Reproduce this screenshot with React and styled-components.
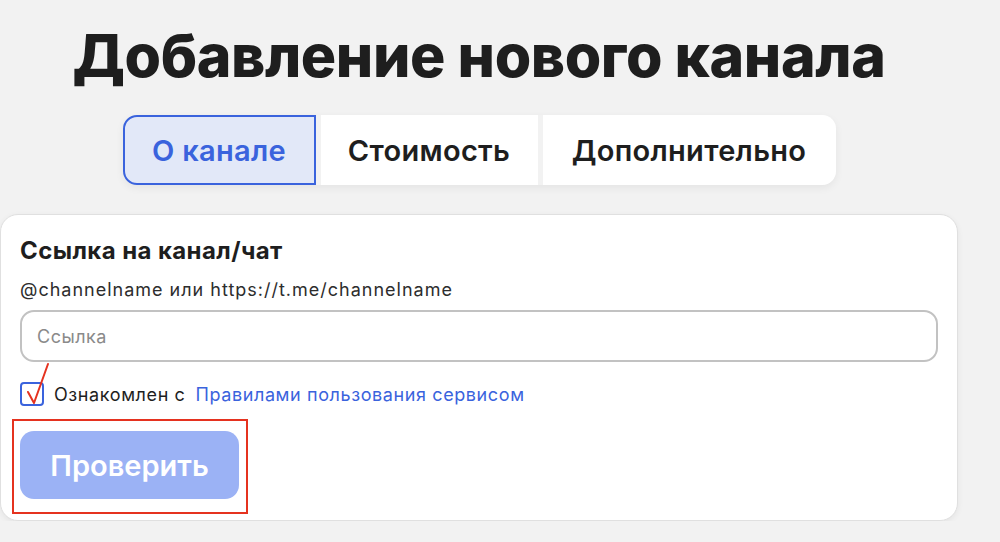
import React, { useState } from 'react';
import styled, { createGlobalStyle } from 'styled-components';

const GlobalStyle = createGlobalStyle`
  html, body {
    margin: 0;
    padding: 0;
    background: #f2f2f2;
    font-family: Inter, "Noto Sans", sans-serif;
    color: #1c1c1c;
  }
`;

const tabs = [
  { label: 'О канале', width: 193 },
  { label: 'Стоимость', width: 217 },
  { label: 'Дополнительно', width: 293 },
];

const Page = styled.div`
  width: 958px;
  display: flex;
  flex-direction: column;
  align-items: center;
  padding-top: 19px;
`;

const Title = styled.h1`
  margin: 0;
  font-size: 59px;
  font-weight: 800;
  letter-spacing: -0.4px;
  line-height: 74px;
  color: #1e1e1e;
`;

const TabBar = styled.div`
  margin-top: 22px;
  display: flex;
  gap: 5px;
  border-radius: 14px;
  box-shadow: 0 3px 8px rgba(0, 0, 0, 0.06);
`;

const Tab = styled.button`
  width: ${(p) => p.$width}px;
  height: 70px;
  padding: 0;
  border: 2px solid ${(p) => (p.$active ? '#3a63dd' : 'transparent')};
  background: ${(p) => (p.$active ? '#e2e8f8' : '#ffffff')};
  color: ${(p) => (p.$active ? '#3a63dd' : '#1e1e1e')};
  font-family: inherit;
  font-size: 29px;
  font-weight: 600;
  letter-spacing: 0.3px;
  cursor: pointer;
  border-radius: 0;

  &:first-child {
    border-radius: 14px 0 0 14px;
  }

  &:last-child {
    border-radius: 0 14px 14px 0;
  }
`;

const Card = styled.div`
  position: relative;
  margin-top: 29px;
  align-self: stretch;
  background: #ffffff;
  border: 1px solid #e0e0e0;
  border-radius: 18px;
  box-shadow: 0 2px 6px rgba(0, 0, 0, 0.06);
  padding: 21px 19px 21px;
  display: flex;
  flex-direction: column;
  align-items: flex-start;
`;

const Heading = styled.h2`
  margin: 0;
  font-size: 24px;
  font-weight: 700;
  letter-spacing: 0.4px;
  color: #1e1e1e;
`;

const Hint = styled.p`
  margin: 14px 0 0;
  font-size: 18px;
  letter-spacing: 1px;
  color: #2d2d2d;
`;

const Input = styled.input`
  margin-top: 10px;
  align-self: stretch;
  height: 52px;
  box-sizing: border-box;
  border: 2px solid #c2c2c2;
  border-radius: 14px;
  padding: 0 15px;
  font-family: inherit;
  font-size: 18px;
  letter-spacing: 0.5px;
  outline: none;

  &::placeholder {
    color: #8a8a8a;
  }
`;

const CheckRow = styled.label`
  position: relative;
  margin-top: 20px;
  display: flex;
  align-items: center;
  gap: 10px;
  font-size: 18px;
  letter-spacing: 0.6px;
  color: #1e1e1e;
`;

const Box = styled.span`
  width: 20px;
  height: 20px;
  border: 2px solid #3a63dd;
  border-radius: 4px;
`;

const Link = styled.a`
  color: #3a63dd;
  text-decoration: none;
`;

const Tick = styled.svg`
  position: absolute;
  left: 0;
  top: -30px;
  overflow: visible;
`;

const ButtonWrap = styled.div`
  position: relative;
  margin-top: 25px;
`;

const Submit = styled.button`
  width: 219px;
  height: 68px;
  border: none;
  border-radius: 14px;
  background: #9bb2f5;
  color: #ffffff;
  font-family: inherit;
  font-size: 29px;
  font-weight: 600;
`;

const Highlight = styled.span`
  position: absolute;
  left: -8px;
  top: -12px;
  width: 232px;
  height: 91px;
  border: 2px solid #e5321f;
  pointer-events: none;
`;

export default function App() {
  const [active, setActive] = useState(0);

  return (
    <>
      <GlobalStyle />
      <Page>
        <Title>Добавление нового канала</Title>
        <TabBar>
          {tabs.map((t, i) => (
            <Tab key={t.label} $width={t.width} $active={active === i} onClick={() => setActive(i)}>
              {t.label}
            </Tab>
          ))}
        </TabBar>
        <Card>
          <Heading>Ссылка на канал/чат</Heading>
          <Hint>@channelname или https://t.me/channelname</Hint>
          <Input placeholder="Ссылка" />
          <CheckRow>
            <Box />
            Ознакомлен с <Link href="#">Правилами пользования сервисом</Link>
            <Tick width="30" height="55" viewBox="0 0 30 55">
              <path d="M8 40 L14 51 L28 12" fill="none" stroke="#e5321f" strokeWidth="2" strokeLinecap="round" strokeLinejoin="round" />
            </Tick>
          </CheckRow>
          <ButtonWrap>
            <Submit>Проверить</Submit>
            <Highlight />
          </ButtonWrap>
        </Card>
      </Page>
    </>
  );
}
